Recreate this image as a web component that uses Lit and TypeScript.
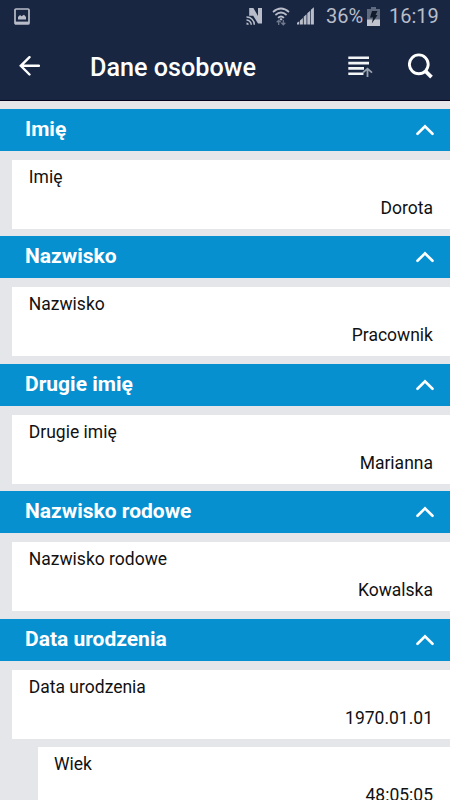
import { LitElement, html, css } from "lit";
import { customElement } from "lit/decorators.js";

interface Section {
  title: string;
  value: string;
}

const sections: Section[] = [
  { title: "Imię", value: "Dorota" },
  { title: "Nazwisko", value: "Pracownik" },
  { title: "Drugie imię", value: "Marianna" },
  { title: "Nazwisko rodowe", value: "Kowalska" },
  { title: "Data urodzenia", value: "1970.01.01" },
];

@customElement("status-bar")
class StatusBar extends LitElement {
  static styles = css`
    :host { display: flex; align-items: center; height: 32px; box-sizing: border-box; padding: 0 12px 0 14px; color: #b9bdc9; font-size: 20px; line-height: 32px; }
    svg { display: block; flex: none; }
    .space { flex: 1; }
    .nfc { margin-right: 9px; }
    .wifi { margin-right: 7px; }
    .signal { margin-right: 12px; }
    .percent { width: 38px; white-space: nowrap; }
    .battery { margin: 0 9px 0 3px; }
    .time { width: 49px; white-space: nowrap; }
  `;
  render() {
    return html`
      <svg width="16" height="17" viewBox="0 0 16 17">
        <rect x="1" y="1" width="14" height="15" rx="1" fill="none" stroke="#b9bdc9" stroke-width="1.7" />
        <path d="M1 13.6h14V16H1z" fill="#b9bdc9" />
        <path d="M4 11.5V9l2-2 1.5 1.3L10 6.8 12 9v2.5z" fill="#b9bdc9" />
      </svg>
      <span class="space"></span>
      <svg class="nfc" width="17" height="19" viewBox="0 0 17 19">
        <path d="M3.2 8.7V1h4.2l4.6 8V1h4v15.5h-4L7.2 8.8z" fill="#b9bdc9" />
        <path d="M.5 10.1a7.5 7.5 0 0 1 7.8 7.7M.5 13.1a4.7 4.7 0 0 1 4.8 4.7" fill="none" stroke="#b9bdc9" stroke-width="1.5" />
        <path d="M.5 15.5a2.3 2.3 0 0 1 2.3 2.3H.5z" fill="#b9bdc9" />
      </svg>
      <svg class="wifi" width="18" height="19" viewBox="0 0 18 19">
        <path d="M1 5q8-7 16 0M3.4 8q5.6-5 11.2 0M6 10.8q3-2.6 6 0" fill="none" stroke="#b9bdc9" stroke-width="1.7" />
        <path d="M7.3 12q1.7-1.3 3.4 0L9 13.8z" fill="#b9bdc9" />
        <path d="M6.7 18v-5M4.7 15.3l2-2 2 2M11.3 13v5M9.3 15.8l2 2 2-2" fill="none" stroke="#717a8c" stroke-width="1.3" />
      </svg>
      <svg class="signal" width="17" height="18" viewBox="0 0 17 18">
        <path d="M0 17.5v-1.8l2.3-1.5v3.3zM3 17.5v-4l2.9-2.6v6.6zM6.7 17.5V9.8l2.8-2.5v10.2zM10.3 17.5V6.3l2.9-2.6v13.8zM13.9 17.5V2.8L16.9.3v17.2z" fill="#b9bdc9" />
      </svg>
      <span class="percent">36%</span>
      <svg class="battery" width="13" height="19" viewBox="0 0 13 19">
        <path d="M4 0h5v2h4v17H0V2h4z" fill="#606a7e" />
        <path d="M0 12.5h13V19H0z" fill="#c1c4ce" />
        <path d="M5 4h5.5L8.6 8h2L4.8 16.5l1.3-6H3z" fill="#101b2b" />
      </svg>
      <span class="time">16:19</span>
    `;
  }
}

@customElement("title-bar")
class TitleBar extends LitElement {
  static styles = css`
    :host { display: flex; align-items: center; height: 69px; box-sizing: border-box; padding: 0 17px 0 19px; border-bottom: 1px solid #040420; color: #fff; }
    svg { display: block; flex: none; }
    h1 { flex: 1; margin: 3px 0 0 50px; font-size: 25.2px; line-height: 32px; font-weight: 500; white-space: nowrap; }
    .sort { margin: 1px 35px 0 0; }
  `;
  render() {
    return html`
      <svg width="21" height="20" viewBox="0 0 21 20">
        <path d="M20 9.8H1.8M10.5 1.2L1.8 9.8l8.7 8.7" fill="none" stroke="#fff" stroke-width="2.4" stroke-linecap="round" />
      </svg>
      <h1>Dane osobowe</h1>
      <svg class="sort" width="25" height="22" viewBox="0 0 25 22">
        <path d="M.3 1.8H21M.3 7.1H21M.3 12.4H16M.3 17.7H15.5" fill="none" stroke="#f2f4f6" stroke-width="2.6" />
        <path d="M19.5 21v-8M15 16.6l4.5-4 4.5 4" fill="none" stroke="#98a1ad" stroke-width="1.8" />
      </svg>
      <svg width="25" height="26" viewBox="0 0 25 26">
        <circle cx="10.8" cy="11.3" r="9.4" fill="none" stroke="#fff" stroke-width="2.9" />
        <path d="M17.2 17.9l6.3 6.2" stroke="#fff" stroke-width="3.7" />
      </svg>
    `;
  }
}

@customElement("app-root")
class AppRoot extends LitElement {
  static styles = css`
    :host { display: block; width: 450px; height: 800px; overflow: hidden; background: #e5e6ea; font-family: Roboto, sans-serif; color: #111; }
    .top { background: #182642; height: 101px; }
    .list { padding-top: 7.8px; }
    .section { height: 127.5px; }
    .head { display: flex; align-items: center; justify-content: space-between; height: 42.2px; box-sizing: border-box; padding: 0 16px 0 25px; background: #0690d0; color: #fff; }
    .head h2 { margin: 0 0 2px; font-size: 21px; line-height: 26px; font-weight: 700; white-space: nowrap; }
    .head svg { display: block; }
    .card { display: flex; flex-direction: column; justify-content: space-between; height: 69px; box-sizing: border-box; margin: 9px 0 0 12.4px; padding: 6.7px 17px 10px 16.4px; background: #fff; font-size: 17.5px; line-height: 21px; }
    .value { align-self: flex-end; }
    .nested { margin: 1px 0 0 37.5px; }
  `;
  render() {
    return html`
      <div class="top">
        <status-bar></status-bar>
        <title-bar></title-bar>
      </div>
      <div class="list">
        ${sections.map(
          (s) => html`
            <div class="section">
              <div class="head">
                <h2>${s.title}</h2>
                <svg width="18" height="12" viewBox="0 0 18 12">
                  <path d="M1.5 9.8L9 2.4l7.5 7.4" fill="none" stroke="#fff" stroke-width="2.6" stroke-linecap="round" />
                </svg>
              </div>
              <div class="card">
                <span>${s.title}</span>
                <span class="value">${s.value}</span>
              </div>
            </div>
          `
        )}
        <div class="card nested">
          <span>Wiek</span>
          <span class="value">48:05:05</span>
        </div>
      </div>
    `;
  }
}
